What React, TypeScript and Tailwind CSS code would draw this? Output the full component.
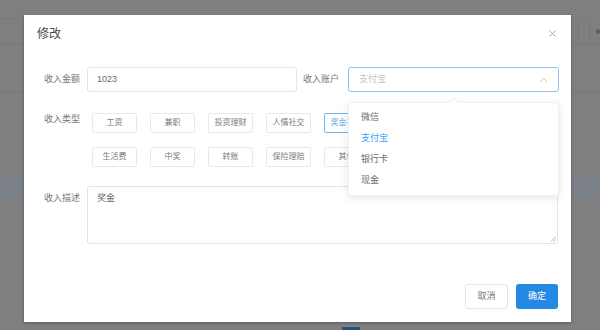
import React from 'react';

const types = ['工资', '兼职', '投资理财', '人情社交', '奖金补贴', '生活费', '中奖', '转账', '保险理赔', '其他'];
const accounts = ['微信', '支付宝', '银行卡', '现金'];

function ChevronUp() {
  return (
    <svg width="9" height="6" viewBox="0 0 9 6" fill="none">
      <path d="M1 5L4.5 1.5L8 5" stroke="#c0c4cc" strokeWidth="1" />
    </svg>
  );
}

export default function App() {
  return (
    <div className="relative w-[600px] h-[330px] overflow-hidden bg-[#7f7f7f] font-['Liberation_Sans','Noto_Sans_CJK_SC',sans-serif]">
      {/* page behind the mask */}
      <div className="absolute left-0 top-[18px] w-[16px] h-px bg-[#777]" />
      <div className="absolute inset-x-0 top-[43px] h-px bg-[#787878]" />
      <div className="absolute inset-x-0 top-[91px] h-px bg-[#777]" />
      <div className="absolute right-[21px] top-[20px] w-px h-[24px] bg-[#777]" />
      <div className="absolute right-[10px] top-[20px] w-px h-[24px] bg-[#777]" />
      <div className="absolute right-0 top-[29px] w-[4px] h-[5px] rounded-full bg-[#5f5f5f]" />
      <div className="absolute inset-x-0 top-[175px] h-[26px] bg-[#7b7f86]" />
      <div className="absolute left-[342px] top-[327px] w-[18px] h-[3px] bg-[#2f4e7e]" />

      {/* dialog */}
      <div className="absolute left-[24px] top-[15px] w-[547px] h-[307px] bg-white shadow-[0_1px_3px_rgba(0,0,0,0.3)] flex flex-col">
        <div className="relative pt-[11px] pl-[13px] h-[27px]">
          <span className="block text-[12px] leading-[16px] text-[#4a4a4a]">修改</span>
          <svg className="absolute right-[15px] top-[15px]" width="7" height="7" viewBox="0 0 7 7">
            <path d="M0.5 0.5L6.5 6.5M6.5 0.5L0.5 6.5" stroke="#a0a0a0" strokeWidth="0.9" />
          </svg>
        </div>

        <div className="mt-[25px] pl-[20px] flex items-center h-[25px]">
          <div className="w-[43px] text-[9px] text-[#777]">收入金额</div>
          <div className="w-[210px] h-[25px] border border-[#e2e4e8] rounded-[3px] px-[9px] flex items-center text-[9px] text-[#6a6a6a]">1023</div>
          <div className="w-[51px] pr-[9px] text-right text-[9px] text-[#777]">收入账户</div>
          <div className="w-[211px] h-[25px] border border-[#8cc2f2] rounded-[3px] px-[10px] flex items-center justify-between text-[9px] text-[#c0c4cc]">
            <span>支付宝</span>
            <ChevronUp />
          </div>
        </div>

        <div className="mt-[21px] pl-[20px] flex">
          <div className="w-[43px] text-[9px] leading-[12px] text-[#777]">收入类型</div>
          <div className="ml-[5px] grid grid-cols-[repeat(5,45px)] gap-x-[13px] gap-y-[14px]">
            {types.map((t, i) => (
              <div
                key={t}
                className={
                  i === 4
                    ? 'h-[20px] border border-[#78b4ee] rounded-[2px] flex items-center justify-center text-[8px] text-[#5aa5ec] whitespace-nowrap overflow-hidden'
                    : 'h-[20px] border border-[#e8e9ec] rounded-[2px] flex items-center justify-center text-[8px] text-[#7a7a7a] whitespace-nowrap overflow-hidden'
                }
              >
                {t}
              </div>
            ))}
          </div>
        </div>

        <div className="mt-[19px] pl-[20px] flex">
          <div className="w-[43px] text-[9px] leading-[25px] text-[#777]">收入描述</div>
          <div className="relative w-[471px] h-[58px] border border-[#e2e4e8] rounded-[3px] px-[9px] pt-[5px] text-[9px] leading-[12px] text-[#6a6a6a]">
            奖金
            <svg className="absolute right-[1px] bottom-[1px]" width="6" height="6" viewBox="0 0 6 6">
              <path d="M1 5.5L5.5 1M3.5 5.5L5.5 3.5" stroke="#a0a0a0" strokeWidth="0.8" />
            </svg>
          </div>
        </div>

        <div className="mt-[40px] pr-[13px] flex justify-end gap-[8px]">
          <div className="w-[43px] h-[25px] border border-[#e2e4e8] rounded-[3px] flex items-center justify-center text-[9px] text-[#777]">取消</div>
          <div className="w-[42px] h-[25px] bg-[#2589e4] rounded-[3px] flex items-center justify-center text-[9px] text-white">确定</div>
        </div>
      </div>

      {/* select dropdown */}
      <div className="absolute left-[348px] top-[102px] w-[211px] py-[4px] bg-white border border-[#f0f1f3] rounded-[3px] shadow-[0_2px_8px_rgba(0,0,0,0.1)]">
        <div className="absolute left-[102px] -top-[4px] w-[6px] h-[6px] bg-white border-l border-t border-[#f0f1f3] rotate-45" />
        {accounts.map((a, i) => (
          <div
            key={a}
            className={
              i === 1
                ? 'h-[21px] px-[12px] flex items-center text-[9px] text-[#409eff]'
                : 'h-[21px] px-[12px] flex items-center text-[9px] text-[#6a6a6a]'
            }
          >
            {a}
          </div>
        ))}
      </div>
    </div>
  );
}
